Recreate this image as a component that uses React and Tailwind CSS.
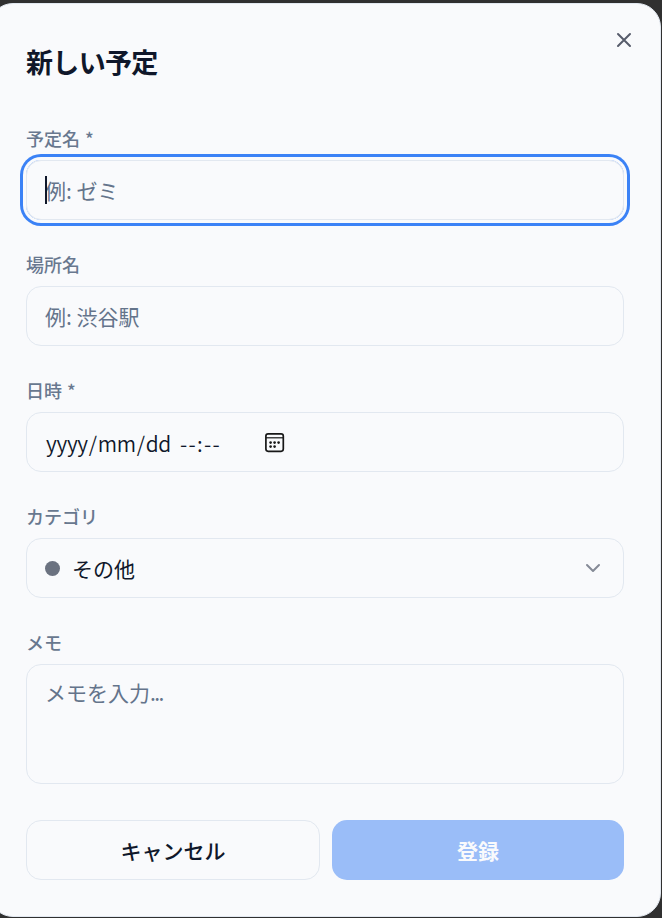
import React from "react";

const CONTROL =
  "block w-full h-[60px] rounded-[15px] border border-[#e2e8f0] bg-transparent px-[18px] text-[21px] leading-[30px] text-[#0f172a] placeholder:text-[#64748b] outline-none";

function Field({ label, children }) {
  return (
    <div className="flex flex-col gap-[10px]">
      <label className="block h-[23px] text-[18px] leading-[22px] font-medium text-[#68788f] [word-spacing:1px]">{label}</label>
      {children}
    </div>
  );
}

function CalendarIcon() {
  return (
    <svg width="21" height="21" viewBox="0 0 21 21" fill="none" stroke="#171717">
      <rect x="1.9" y="1.9" width="17.4" height="17.4" rx="2.2" strokeWidth="1.7" />
      <path d="M2 5.8h17" strokeWidth="1.2" />
      <g fill="#171717" stroke="none">
        <circle cx="6.6" cy="10.6" r="1.3" />
        <circle cx="10.6" cy="10.6" r="1.3" />
        <circle cx="14.6" cy="10.6" r="1.3" />
        <circle cx="6.6" cy="14.6" r="1.3" />
        <circle cx="10.6" cy="14.6" r="1.3" />
      </g>
    </svg>
  );
}

export default function App() {
  return (
    <div className="h-[918px] w-[662px] overflow-hidden bg-[#303030] pt-[3px] font-['Noto_Sans_CJK_JP',sans-serif]">
      <div className="relative -ml-[11px] h-[914px] w-[672px] rounded-[24px] border border-[#e2e8f0] bg-[#f9fafc] px-9 pt-[37px]">
        <button aria-label="閉じる" className="absolute right-[24px] top-[24px] flex size-6 items-center justify-center">
          <svg width="24" height="24" viewBox="0 0 24 24" fill="none" stroke="#575c6b" strokeWidth="2" strokeLinecap="round">
            <path d="M18 6 6 18M6 6l12 12" />
          </svg>
        </button>
        <h2 className="h-[42px] text-[27px] leading-[42px] font-bold tracking-[-0.025em] text-[#0f172a]">新しい予定</h2>

        <form className="mt-11 flex flex-col gap-[33px]">
          <Field label="予定名 *">
            <div className="relative rounded-[15px] shadow-[0_0_0_3px_#f9fafc,0_0_0_6px_#3b82f6]">
              <input className={CONTROL} placeholder="例: ゼミ" />
              <span className="absolute left-[19px] top-4 h-7 w-[2px] bg-[#0f172a]" />
            </div>
          </Field>
          <Field label="場所名">
            <input className={CONTROL} placeholder="例: 渋谷駅" />
          </Field>
          <Field label="日時 *">
            <div className={`${CONTROL} !flex items-center`}>
              <div className="flex w-[219px] pl-px pt-[2px] font-[350] text-[#0f172a]">
                <span className="w-[134px] tracking-[-0.3px]">
                  yyyy<span className="px-px">/</span>mm<span className="px-px">/</span>dd
                </span>
                <span className="tracking-[1.3px]">--:--</span>
              </div>
              <CalendarIcon />
            </div>
          </Field>
          <Field label="カテゴリ">
            <div className={`${CONTROL} !flex items-center`}>
              <span className="mr-3 size-[15px] rounded-full bg-[#6b7280]" />
              <span className="flex-1">その他</span>
              <svg width="24" height="24" viewBox="0 0 24 24" fill="none" stroke="#858a96" strokeWidth="2" strokeLinecap="round" strokeLinejoin="round">
                <path d="m6 9 6 6 6-6" />
              </svg>
            </div>
          </Field>
          <Field label="メモ">
            <div role="textbox" className={`${CONTROL} !h-[120px] pt-[12px] !text-[#64748b]`}>
              メモを入力<span className="tracking-[-1.6px]">...</span>
            </div>
          </Field>
        </form>

        <div className="mt-9 flex gap-3">
          <button className="h-[60px] w-[294px] rounded-[15px] border border-[#e2e8f0] text-[21px] leading-[30px] font-medium text-[#0f172a]">
            キャンセル
          </button>
          <button className="h-[60px] w-[292px] rounded-[15px] bg-[#9abdf8] text-[21px] leading-[30px] font-bold text-[#f9fafc]">
            登録
          </button>
        </div>
      </div>
    </div>
  );
}
